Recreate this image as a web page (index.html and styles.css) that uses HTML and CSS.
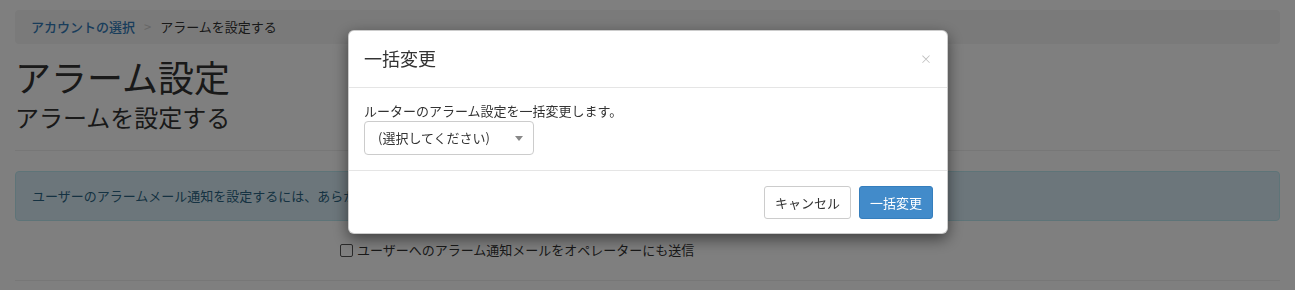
FILE: index.html
```html
<!DOCTYPE html>
<html lang="ja">
<head>
<meta charset="utf-8">
<link rel="stylesheet" href="styles.css">
</head>
<body>
<div class="container">
  <ol class="breadcrumb">
    <li><a href="#">アカウントの選択</a></li>
    <li class="sep">&gt;</li>
    <li>アラームを設定する</li>
  </ol>
  <h1 class="title">アラーム設定</h1>
  <h2 class="subtitle">アラームを設定する</h2>
  <hr class="rule">
  <div class="alert">ユーザーのアラームメール通知を設定するには、あらかじめユーザーのメールアドレスを登録してください。</div>
  <div class="check-row">
    <label class="check"><span class="box"></span>ユーザーへのアラーム通知メールをオペレーターにも送信</label>
  </div>
  <hr class="rule bottom">
</div>

<div class="backdrop"></div>

<div class="modal">
  <div class="modal-header">
    <h4 class="modal-title">一括変更</h4>
    <span class="close">×</span>
  </div>
  <div class="modal-body">
    <p class="desc">ルーターのアラーム設定を一括変更します。</p>
    <div class="select">
      <span>(選択してください)</span>
      <span class="caret"></span>
    </div>
  </div>
  <div class="modal-footer">
    <button class="btn btn-default">キャンセル</button>
    <button class="btn btn-primary">一括変更</button>
  </div>
</div>
</body>
</html>
```
FILE: styles.css
```css
* { box-sizing: border-box; }
html, body { margin: 0; padding: 0; }
body {
  width: 1295px;
  height: 290px;
  overflow: hidden;
  background: #fff;
  color: #333;
  font-family: "Noto Sans CJK JP", "Liberation Sans", sans-serif;
  font-size: 13px;
  line-height: 1.42857;
}
.container { padding: 10px 15px 0 15px; }
.breadcrumb {
  list-style: none;
  margin: 0;
  padding: 0 16px;
  height: 34px;
  display: flex;
  align-items: center;
  background: #f5f5f5;
  border-radius: 4px;
}
.breadcrumb a { color: #337ab7; text-decoration: none; font-weight: 500; }
.breadcrumb .sep { color: #ccc; padding: 0 9px; }
.title {
  font-size: 36px;
  font-weight: 400;
  line-height: 42px;
  margin: 11px 0 0 0;
}
.subtitle {
  font-size: 24px;
  font-weight: 400;
  line-height: 28px;
  margin: 6px 0 0 0;
}
.rule { border: 0; border-top: 1px solid #eee; margin: 19px 0 0 0; }
.alert {
  margin-top: 20px;
  height: 50px;
  padding: 0 16px;
  display: flex;
  align-items: center;
  background: #d9edf7;
  border: 1px solid #bce8f1;
  border-radius: 4px;
  color: #2b6584;
  white-space: nowrap;
  overflow: hidden;
}
.check-row { padding-left: 325px; margin-top: 20px; }
.check { display: flex; align-items: center; gap: 4px; }
.box {
  width: 13px; height: 13px;
  border: 1px solid #555;
  border-radius: 2px;
  background: #fff;
}
.bottom { margin-top: 20px; }
.backdrop {
  position: fixed;
  inset: 0;
  background: rgba(0,0,0,0.5);
}
.modal {
  position: fixed;
  top: 30px;
  left: 348px;
  width: 600px;
  background: #fff;
  border: 1px solid rgba(0,0,0,0.2);
  border-radius: 6px;
  box-shadow: 0 5px 15px rgba(0,0,0,0.5);
}
.modal-header {
  height: 57px;
  padding: 0 15px;
  border-bottom: 1px solid #e5e5e5;
  display: flex;
  align-items: center;
  justify-content: space-between;
}
.modal-title { margin: 0; font-size: 18px; font-weight: 400; }
.close { color: #000; opacity: 0.25; font-size: 12px; margin-right: 0; }
.modal-body { padding: 13px 15px 15px 15px; }
.desc { margin: 0 0 0 0; line-height: 20px; }
.select {
  margin-top: 0;
  width: 170px;
  height: 34px;
  border: 1px solid #ccc;
  border-radius: 4px;
  padding: 0 10px 0 13px;
  display: flex;
  align-items: center;
  justify-content: space-between;
  color: #333;
}
.caret {
  width: 0; height: 0;
  border-left: 4px solid transparent;
  border-right: 4px solid transparent;
  border-top: 5px solid #888;
}
.modal-footer {
  padding: 15px 14px 14px 15px;
  border-top: 1px solid #e5e5e5;
  display: flex;
  justify-content: flex-end;
  gap: 8px;
}
.btn {
  font-family: inherit;
  font-size: 13px;
  height: 33px;
  padding: 0 10px;
  border-radius: 3px;
  border: 1px solid;
  cursor: pointer;
}
.btn-default { background: #fff; color: #333; border-color: #ccc; }
.btn-primary { background: #428bca; color: #fff; border-color: #357ebd; }
```
